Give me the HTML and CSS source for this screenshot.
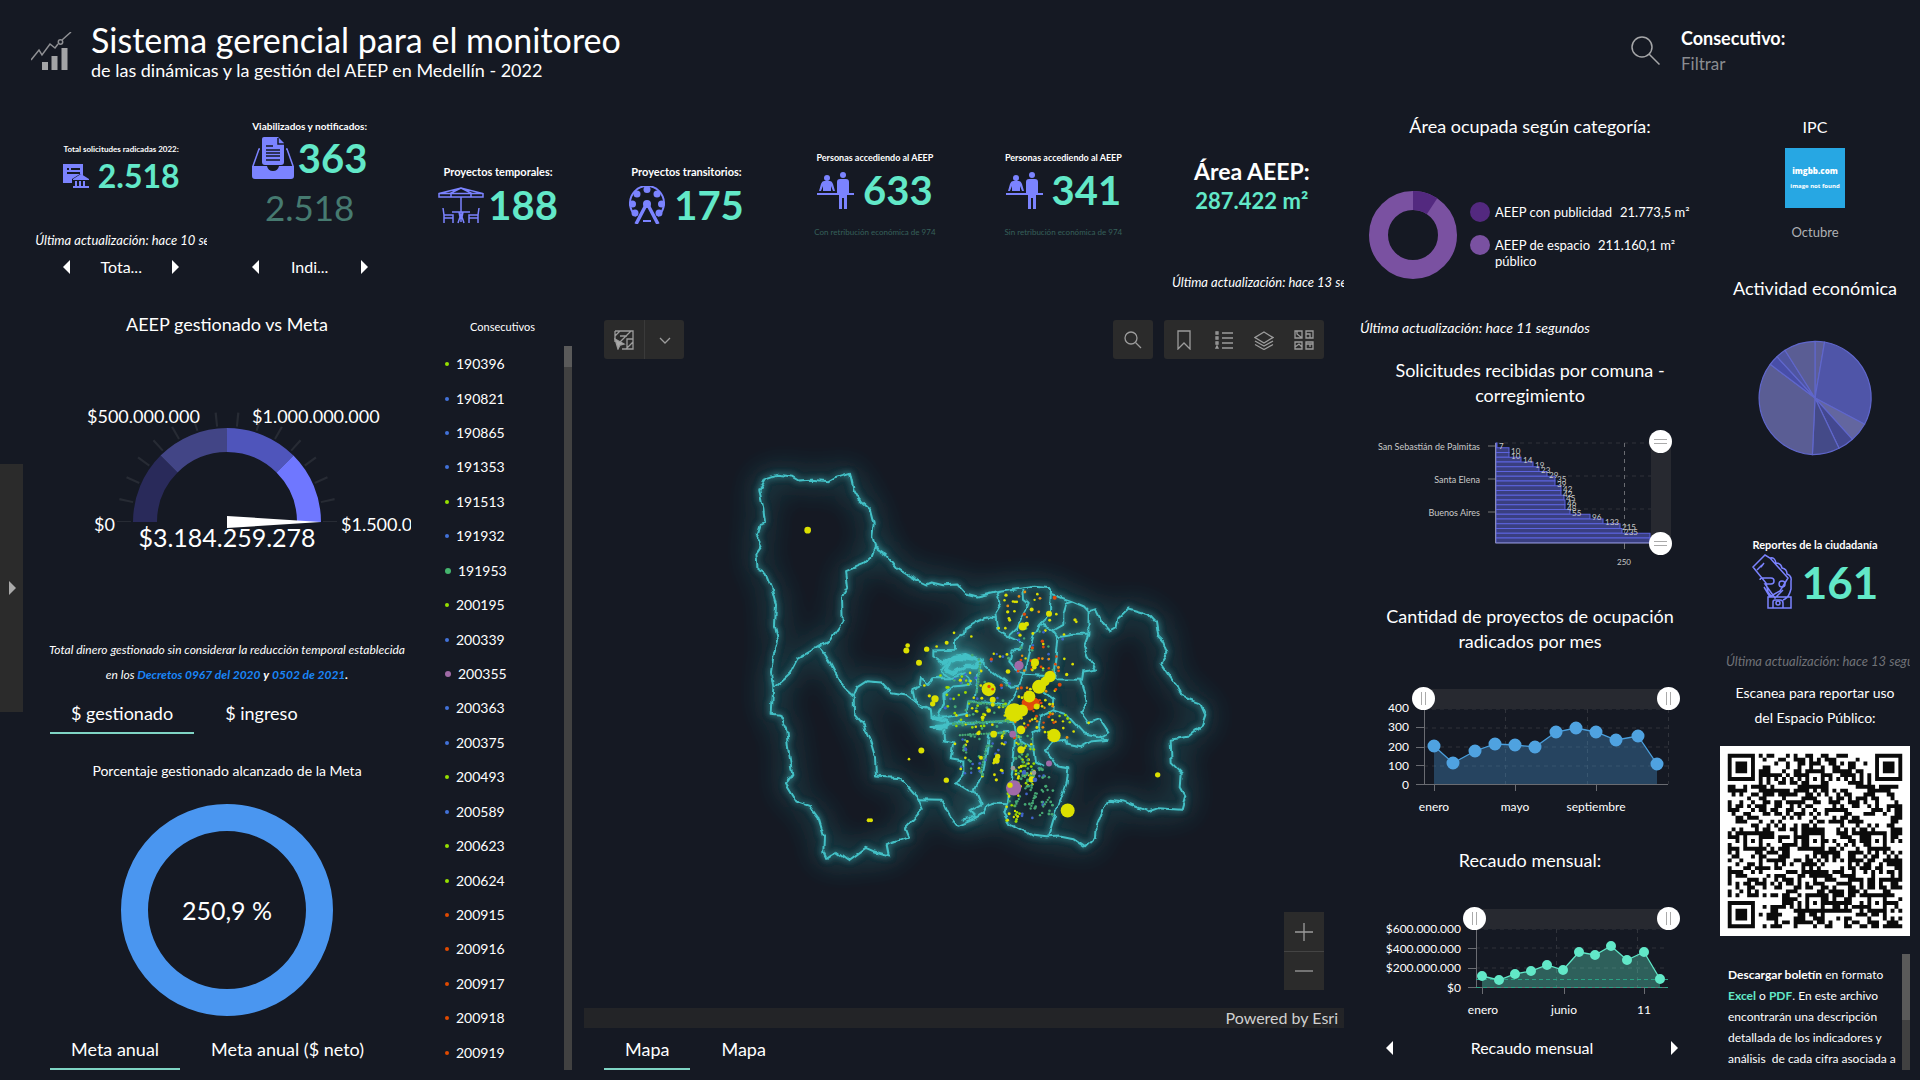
FILE: index.html
```html
<!DOCTYPE html>
<html lang="es">
<head>
<meta charset="utf-8">
<meta name="viewport" content="width=device-width, initial-scale=1">
<title>Sistema gerencial para el monitoreo</title>
<link rel="stylesheet" href="styles.css">
</head>
<body>
<svg class="defs" aria-hidden="true">
  <symbol id="people" viewBox="0 0 37 37">
    <circle cx="10" cy="6" r="3"/><circle cx="26" cy="3" r="3"/>
    <path d="M7 9h6q2 0 3 3l2 7h-2l-2-5v5H6v-5l-2 5H2l2-7q1-3 3-3zM20 10q0-3 3-3h6q3 0 3 3v11h-2v5h-8v-5h-2zM0 21h37v2H0zM22 24h3v13h-3zM27 24h3v13h-3z"/>
  </symbol>
  <symbol id="prev" viewBox="0 0 8 14"><path d="M7 0v14L0 7z"/></symbol>
  <symbol id="next" viewBox="0 0 8 14"><path d="M1 0v14l7-7z"/></symbol>
</svg>

<header class="top">
  <svg class="logo" viewBox="0 0 41 38" aria-hidden="true">
    <path d="M0 28l8-10 3 5 8-11 5 4 3-4M31 8l9-8" fill="none" stroke="#8f9094" stroke-width="1.5"/>
    <circle cx="29.500" cy="10" r="2.200" fill="none" stroke="#8f9094" stroke-width="1.500"/>
    <path d="M11 30h6v8h-6zM20.500 24h6v14h-6zM30.500 16h6v22h-6z" fill="#a3a4a6"/>
  </svg>
  <div class="heading">
    <h1>Sistema gerencial para el monitoreo</h1>
    <p>de las dinámicas y la gestión del AEEP en Medellín - 2022</p>
  </div>
  <div class="filter">
    <svg viewBox="0 0 29 29" aria-hidden="true"><circle cx="11" cy="11" r="10"/><path d="M18 18l10.500 10.500"/></svg>
    <div>
      <label for="consecutivo">Consecutivo:</label>
      <input id="consecutivo" type="text" placeholder="Filtrar">
    </div>
  </div>
</header>

<button class="drawer" aria-label="Abrir panel"><svg viewBox="0 0 8 14"><use href="#next"/></svg></button>

<main class="board">
  <div class="wide">
    <section class="kpis">
      <article class="kpi">
        <div class="body">
          <h2 class="t8">Total solicitudes radicadas 2022:</h2>
          <div class="figure">
            <svg class="i26" viewBox="0 0 26 24" aria-hidden="true"><path d="M0 0h20v12l-3-2-8 5v4H0z"/><path d="M4 4h2v2H4zM8 4h9v2H8zM4 8h13v2H4z" fill="#151923"/><path d="M10 15l8-5 8 5v1H10zM12 17h2v5h-2zM16 17h2v5h-2zM20 17h2v5h-2zM10 22h16v2H10z"/></svg>
            <strong class="n30">2.518</strong>
          </div>
        </div>
        <p class="update">Última actualización: hace 10 segundos</p>
        <nav class="pager"><button aria-label="Anterior"><svg><use href="#prev"/></svg></button><span>Tota...</span><button aria-label="Siguiente"><svg><use href="#next"/></svg></button></nav>
      </article>
      <article class="kpi">
        <div class="body">
          <h2 class="t10">Viabilizados y notificados:</h2>
          <div class="figure tight">
            <svg class="i42" viewBox="0 0 42 42" aria-hidden="true"><path d="M10 2q0-2 2-2h14l6 6v19q0 3-3 3H13q-3 0-3-3z"/><path d="M26 1v6h6M14 9h7M14 13h14M14 16h14M14 19h14M14 23h14" fill="none" stroke="#151923" stroke-width="1.500"/><path d="M8 12h-1L1 29v10M34 12h1l6 17v10" fill="none" stroke="#7b83ff" stroke-width="1.500"/><path d="M0 29h15q1 5 6 5t6-5h15v10q0 3-3 3H3q-3 0-3-3z"/></svg>
            <strong class="n40">363</strong>
          </div>
          <span class="second">2.518</span>
        </div>
        <nav class="pager"><button aria-label="Anterior"><svg><use href="#prev"/></svg></button><span>Indi...</span><button aria-label="Siguiente"><svg><use href="#next"/></svg></button></nav>
      </article>
      <article class="kpi plain">
        <div class="body">
          <h2 class="t11">Proyectos temporales:</h2>
          <div class="figure tight">
            <svg class="i46 line" viewBox="0 0 46 37" aria-hidden="true"><path d="M1 6.500L23 1l22 5.500V10H1zM23 1L13 6v4M23 1l10 5v4M1 6.500h44M23 10v25M14 25h18M5 21l1 7v8M6 28h9v8M6 31h9M41 21l-1 7v8M40 28h-9v8M40 31h-9M21 25l1 5-2 6M25 25l-1 5 2 6"/></svg>
            <strong class="n40">188</strong>
          </div>
        </div>
      </article>
      <article class="kpi plain">
        <div class="body">
          <h2 class="t11">Proyectos transitorios:</h2>
          <div class="figure">
            <svg class="i36" viewBox="0 0 36 38" aria-hidden="true"><path d="M7 30A17 17 0 1 1 29 30" fill="none" stroke="#7b83ff" stroke-width="2"/><g><circle cx="18" cy="3.500" r="3.500"/><circle cx="8" cy="8" r="3.500"/><circle cx="28" cy="8" r="3.500"/><circle cx="3.500" cy="18" r="3.500"/><circle cx="32.500" cy="18" r="3.500"/><circle cx="6" cy="27" r="3.500"/><circle cx="30" cy="27" r="3.500"/><circle cx="18" cy="18" r="4"/></g><path d="M17 19L7 38M19 19l10 19" stroke="#7b83ff" stroke-width="3.500"/><path d="M14 34h8v2h-8z"/></svg>
            <strong class="n40">175</strong>
          </div>
        </div>
      </article>
      <article class="kpi plain">
        <div class="body">
          <h2 class="t9">Personas accediendo al AEEP</h2>
          <div class="figure"><svg class="i37" aria-hidden="true"><use href="#people"/></svg><strong class="n40">633</strong></div>
          <p class="foot">Con retribución económica de 974</p>
        </div>
      </article>
      <article class="kpi plain">
        <div class="body">
          <h2 class="t9">Personas accediendo al AEEP</h2>
          <div class="figure"><svg class="i37" aria-hidden="true"><use href="#people"/></svg><strong class="n40">341</strong></div>
          <p class="foot">Sin retribución económica de 974</p>
        </div>
      </article>
      <article class="kpi">
        <div class="body">
          <h2 class="t22">Área AEEP:</h2>
          <strong class="n21">287.422 m²</strong>
        </div>
        <p class="update low">Última actualización: hace 13 segundos</p>
      </article>
    </section>

    <div class="lower">
      <div class="goals">
        <section class="goal">
          <h2 class="title">AEEP gestionado vs Meta</h2>
          <svg class="gauge" viewBox="43 400 368 160">
            <path class="ticks" pathLength="150" d="M124 522a103 103 0 0 1 206 0"/>
            <g fill="none" stroke-width="24">
              <path stroke="#292a5a" d="M145 522a82 82 0 0 1 24.020-57.980"/>
              <path stroke="#424586" d="M169.020 464.020A82 82 0 0 1 227 440"/>
              <path stroke="#4f55bb" d="M227 440a82 82 0 0 1 57.980 24.020"/>
              <path stroke="#6f77ff" d="M284.980 464.020A82 82 0 0 1 309 522"/>
            </g>
            <path d="M227 516l94 6-94 6z" fill="#fff"/>
            <text class="s18" x="94" y="531">$0</text>
            <text class="s18" x="87" y="423">$500.000.000</text>
            <text class="s18" x="252" y="423">$1.000.000.000</text>
            <text class="s18" x="341" y="531">$1.500.000.000</text>
            <text class="s25" x="227" y="547" text-anchor="middle">$3.184.259.278</text>
          </svg>
          <p class="note">Total dinero gestionado sin considerar la reducción temporal establecida<br>en los <a href="#d0967">Decretos 0967 del 2020</a> <b>y</b> <a href="#d0502">0502 de 2021</a><b>.</b></p>
          <div class="tabs"><button class="on">$ gestionado</button><button>$ ingreso</button></div>
        </section>
        <section class="goal ring">
          <h2 class="small-title">Porcentaje gestionado alcanzado de la Meta</h2>
          <svg viewBox="0 0 212 212"><circle cx="106" cy="106" r="92.500" fill="none" stroke="#4a96f0" stroke-width="27"/><text class="s25" x="106" y="116" text-anchor="middle">250,9 %</text></svg>
          <div class="tabs"><button class="on">Meta anual</button><button>Meta anual ($ neto)</button></div>
        </section>
      </div>

      <section class="consecutives">
        <h2>Consecutivos</h2>
        <div class="scroll-area">
          <ul>
            <li class="lime">190396</li><li class="blue">190821</li><li class="blue">190865</li><li class="blue">191353</li><li class="lime">191513</li><li class="blue">191932</li><li class="green">191953</li><li class="lime">200195</li><li class="blue">200339</li><li class="violet">200355</li><li class="blue">200363</li><li class="blue">200375</li><li class="lime">200493</li><li class="blue">200589</li><li class="lime">200623</li><li class="lime">200624</li><li class="red">200915</li><li class="red">200916</li><li class="red">200917</li><li class="red">200918</li><li class="red">200919</li>
          </ul>
          <div class="bar"><i></i></div>
        </div>
      </section>

      <section class="map-panel">
        <div class="map">
          <svg class="canvas" id="map" viewBox="-408 -412 2280 2109" role="img" aria-label="Mapa">
            <defs>
              <filter id="glow" x="-20%" y="-20%" width="140%" height="140%">
                <feTurbulence type="fractalNoise" baseFrequency="0.030" numOctaves="2" seed="4" result="n"/>
                <feDisplacementMap in="SourceGraphic" in2="n" scale="18" xChannelSelector="R" yChannelSelector="G" result="l"/>
                <feGaussianBlur in="l" stdDeviation="9" result="b1"/>
                <feGaussianBlur in="l" stdDeviation="45" result="b2"/>
                <feMerge><feMergeNode in="b2"/><feMergeNode in="b2"/><feMergeNode in="b1"/><feMergeNode in="l"/></feMerge>
              </filter>
            </defs>
            <g class="borders" filter="url(#glow)">
              <path d="M137 117L172 105 220 111 238 122 275 120 325 124 345 113 390 99 401 150 418 180 450 208 461 252 457 288 465 322 455 348 430 370 378 391 384 440 366 470 368 545 330 600 298 618"/>
              <path d="M137 117L118 152 130 205 135 250 116 256 107 285 125 322 109 345 113 390 140 405 154 440 168 495 165 560 174 600 160 650 153 700 160 740 155 822 180 825 198 865 205 930 217 1003 198 1030 232 1085 270 1098 294 1130 312 1190 310 1235 320 1257 350 1236 386 1262 437 1224 460 1234 506 1247 500 1216 566 1193 555 1165 608 1108 596 1078 540 1015 468 1010 465 950 450 900 427 850 402 820 401 768"/>
              <path d="M298 618L270 635 232 657 210 700 165 740M298 618L330 668 360 725 376 745 401 768 412 742 440 724 485 728 515 760 560 768 590 790 595 802 632 808"/>
              <path d="M465 322L500 345 535 388 570 410 620 434 635 428 670 436 712 434 735 460 772 470 830 457 880 450 940 441 993 445 993 462 1057 485 1092 500 1106 515 1127 508 1145 545 1172 575 1190 565 1195 535 1225 506 1290 525 1308 545 1315 590 1330 605 1342 640 1325 670 1345 700 1370 735 1385 770 1440 790 1456 825 1445 858 1405 890 1352 900 1355 970 1385 1000 1382 1045 1396 1070 1385 1110 1315 1105 1285 1115 1210 1085 1165 1080 1145 1120 1130 1160 1128 1190 1095 1222 1060 1198 1020 1190 980 1192 940 1188 895 1165 868 1150 850 1120 858 1090 825 1088 800 1096 790 1120 760 1138 712 1158 690 1130 668 1080 596 1078"/>
              <path d="M830 457L844 490 826 520 832 570 865 592 905 610 900 630 875 632 868 665 885 685 915 705M826 535L800 533 768 548 738 566 735 585 705 600 705 630 640 632 640 650 680 675 665 695 690 715"/>
              <path d="M910 450L912 480 926 492 918 515 900 545 890 570 868 592M993 450L990 510 975 540 960 555 940 590 925 640 915 700 895 740 865 790 860 825"/>
              <path d="M960 555L1000 572 1030 555 1030 525 1040 490 1057 485M1106 515L1105 585 1060 585 1015 592 1000 572M1105 585L1092 620 1105 655 1125 690 1090 695 1086 720 1010 718 1000 710 915 705M1015 592L1010 650 1003 712"/>
              <path stroke-width="11" d="M665 672L700 650 740 645 780 662 765 680 735 680 700 700 680 690 690 665 720 655 760 660"/>
              <path d="M780 662L810 690 840 715 870 738 895 735M780 662L772 720 765 770M690 715L735 700 752 715 750 735 700 740 670 765 672 790 655 830M640 715L675 712M690 715L640 715 625 735 603 708 600 735 580 745 590 790 632 808 635 835 680 832 740 822 745 785 800 785 860 795"/>
              <path stroke-width="9" d="M640 832L680 845 680 858 632 860 680 866"/>
              <path d="M680 852L780 848 880 843M670 870L672 905 700 910 692 955 730 962 730 1000 705 1030 745 1055 765 1056M880 843L885 890 882 950 872 1030 862 1090 850 1120M872 876L808 882 800 940 788 1000 765 1050 780 1085 785 1095 750 1115 765 1130 725 1140"/>
              <path d="M970 755L1003 780 1000 810 960 830 955 870 940 880 940 925 885 890M1000 812L1040 825 1090 880 1140 890 1165 875 1140 838 1105 850 1080 815 1100 785 1080 720M1165 900L1110 905 1080 922 1040 915 1035 900 1000 905 975 935 1015 980 1045 985 1040 1030 1015 1100 1000 1140 985 1190M940 925L945 965 975 980M1140 890L1165 900"/>
            </g>
          </svg>
          <div class="tools left">
            <button aria-label="Seleccionar"><svg viewBox="0 0 20 20"><path d="M1 1h18v18H8M1 12V1M1 6l5-5M6 12L17 1M12 19l7-7M13 19V9h6M6 6h7"/><path d="M1 9l9 5-4 1-2 4z" fill="#aaa"/></svg></button>
            <button aria-label="Más opciones"><svg viewBox="0 0 20 20"><path d="M5 8l5 5 5-5"/></svg></button>
          </div>
          <div class="tools right">
            <div class="set"><button aria-label="Buscar"><svg viewBox="0 0 20 20"><circle cx="8" cy="8" r="6"/><path d="M12.500 12.500L18 18"/></svg></button></div>
            <div class="set">
              <button aria-label="Marcadores"><svg viewBox="0 0 20 20"><path d="M4 1h12v18l-6-6-6 6z"/></svg></button>
              <button aria-label="Leyenda"><svg viewBox="0 0 20 20"><path d="M8 3h11M8 8h11M8 13h11M8 18h11M2 2h2v2H2zM2 7h2v2H2zM2 12h2v2H2zM2 18l1-2 1 2z"/></svg></button>
              <button aria-label="Capas"><svg viewBox="0 0 20 20"><path d="M10 2l9 5.500-9 5.500-9-5.500zM1 11l9 5 9-5M1 14.500l9 5 9-5"/></svg></button>
              <button aria-label="Mapas base"><svg viewBox="0 0 20 20"><path d="M1 1h7v7H1zM12 1h7v7h-7zM1 12h7v7H1zM12 12h7v7h-7zM3 1v3l5 4M12 4h4v4M1 17l4-3 3 3M12 14h7M16 14v3"/></svg></button>
            </div>
          </div>
          <div class="tools zoom">
            <button aria-label="Acercar"><svg viewBox="0 0 20 20"><path d="M10 1v18M1 10h18"/></svg></button>
            <button aria-label="Alejar"><svg viewBox="0 0 20 20"><path d="M1 10h18"/></svg></button>
          </div>
          <p class="credit">Powered by Esri</p>
        </div>
        <div class="tabs"><button class="on">Mapa</button><button>Mapa</button></div>
      </section>
    </div>
  </div>

  <div class="charts">
    <section class="card area">
      <h2 class="title">Área ocupada según categoría:</h2>
      <div class="split">
        <svg viewBox="0 0 88 88" aria-hidden="true"><g fill="none" stroke-width="19" transform="rotate(-90 44 44)"><circle cx="44" cy="44" r="34.500" stroke="#7a51a1"/><circle cx="44" cy="44" r="34.500" stroke="#53297f" pathLength="100" stroke-dasharray="9.300 90.700"/></g></svg>
        <ul class="legend">
          <li class="dark"><span>AEEP con publicidad</span><b>21.773,5 m²</b></li>
          <li><span>AEEP de espacio<br>público</span><b>211.160,1 m²</b></li>
        </ul>
      </div>
      <p class="update">Última actualización: hace 11 segundos</p>
    </section>

    <section class="card districts">
      <h2 class="title">Solicitudes recibidas por comuna -<br>corregimiento</h2>
      <div class="chart">
        <svg id="bars" viewBox="1348 410 368 165">
          <path class="grid" d="M1496 443h155M1496 476h155M1496 509h155"/>
          <path d="M1624.500 443v100" fill="none" stroke="#6a6c72" stroke-dasharray="4 4"/>
          <path d="M1488 446h8M1488 479h8M1488 512h8M1624.500 543v6" stroke="#777"/>
          <text class="s9" x="1480" y="450" text-anchor="end">San Sebastián de Palmitas</text>
          <text class="s9" x="1480" y="483" text-anchor="end">Santa Elena</text>
          <text class="s9" x="1480" y="516" text-anchor="end">Buenos Aires</text>
          <text class="s8" x="1624" y="565" text-anchor="middle">250</text>
        </svg>
        <div class="range upright"><input type="range" value="0" aria-label="Inicio"><input type="range" value="100" aria-label="Fin"></div>
      </div>
    </section>

    <section class="card monthly">
      <h2 class="title">Cantidad de proyectos de ocupación<br>radicados por mes</h2>
      <div class="chart">
        <svg viewBox="1348 655 368 165">
          <path class="grid" d="M1424 708h244M1424 727h244M1424 746h244M1424 765h244M1505.500 708v75M1587.500 708v75M1668.500 708v75"/>
          <path class="axis" d="M1424.500 700v83M1416 783.500h252M1416 726.500h8M1416 746.500h8M1416 764.500h8M1434.500 784v6M1515.500 784v6M1596.500 784v6"/>
          <path fill="#4a9fdd" fill-opacity=".33" d="M1434 783V745L1453 762 1475 750 1495 743 1515 744 1535 746 1556 731 1576 727 1596 731 1616 739 1638 735 1657 763V783z"/>
          <path class="run" stroke="#4a9fdd" d="M1434 745L1453 762 1475 750 1495 743 1515 744 1535 746 1556 731 1576 727 1596 731 1616 739 1638 735 1657 763"/>
          <path class="dots big" stroke="#4fa2e0" d="M1434 745h0M1453 762h0M1475 750h0M1495 743h0M1515 744h0M1535 746h0M1556 731h0M1576 727h0M1596 731h0M1616 739h0M1638 735h0M1657 763h0"/>
          <g class="s12" text-anchor="end"><text x="1409" y="711">400</text><text x="1409" y="730">300</text><text x="1409" y="750">200</text><text x="1409" y="769">100</text><text x="1409" y="788">0</text></g>
          <g class="s12" text-anchor="middle"><text x="1434" y="810">enero</text><text x="1515" y="810">mayo</text><text x="1596" y="810">septiembre</text></g>
        </svg>
        <div class="range full"><input type="range" value="0" aria-label="Inicio"><input type="range" value="100" aria-label="Fin"></div>
      </div>
    </section>

    <section class="card income">
      <h2 class="title">Recaudo mensual:</h2>
      <div class="chart">
        <svg viewBox="1348 874 368 150">
          <path class="grid" d="M1476 928h192M1476 947h192M1476 967h192M1556.500 928v58M1637.500 928v58"/>
          <path class="axis" d="M1476.500 928v58M1468 986.500h200M1468 947.500h8M1468 967.500h8M1482.500 987v6M1564.500 987v6M1644.500 987v6"/>
          <path fill="#5fe6c6" fill-opacity=".35" d="M1482 986V975L1499 979 1515 973 1531 970 1547 964 1563 969 1579 951 1595 954 1611 945 1627 959 1644 951 1660 978V986z"/>
          <path d="M1476 978.500h192M1476 986.500h192" fill="none" stroke="#2aa184" stroke-dasharray="4 3"/>
          <path class="run" stroke="#5fe6c6" d="M1482 975L1499 979 1515 973 1531 970 1547 964 1563 969 1579 951 1595 954 1611 945 1627 959 1644 951 1660 978"/>
          <path class="dots" stroke="#62e8c8" d="M1482 975h0M1499 979h0M1515 973h0M1531 970h0M1547 964h0M1563 969h0M1579 951h0M1595 954h0M1611 945h0M1627 959h0M1644 951h0M1660 978h0"/>
          <g class="s12" text-anchor="end"><text x="1461" y="932">$600.000.000</text><text x="1461" y="952">$400.000.000</text><text x="1461" y="971">$200.000.000</text><text x="1461" y="991">$0</text></g>
          <g class="s12" text-anchor="middle"><text x="1483" y="1013">enero</text><text x="1564" y="1013">junio</text><text x="1644" y="1013">11</text></g>
        </svg>
        <div class="range short"><input type="range" value="0" aria-label="Inicio"><input type="range" value="100" aria-label="Fin"></div>
      </div>
      <nav class="pager spread"><button aria-label="Anterior"><svg><use href="#prev"/></svg></button><span>Recaudo mensual</span><button aria-label="Siguiente"><svg><use href="#next"/></svg></button></nav>
    </section>
  </div>

  <aside class="side">
    <section class="ipc">
      <h2 class="t16">IPC</h2>
      <div class="missing"><b>imgbb.com</b><span>image not found</span></div>
      <p>Octubre</p>
    </section>
    <section class="activity">
      <h2 class="title">Actividad económica</h2>
      <svg viewBox="-58 -58 116 116" role="img" aria-label="Actividad económica">
        <g stroke="#6067cc" stroke-width="1.200" stroke-linejoin="round">
          <path fill="#5c5e96" d="M0 0V-56.700A56.700 56.700 0 0 1 9.600-56z"/>
          <path fill="#4f55a8" d="M0 0L9.600-56A56.700 56.700 0 0 1 49.600 26.300z"/>
          <path fill="#63669f" d="M0 0L49.600 26.300A56.700 56.700 0 0 1 37.400 41.300z"/>
          <path fill="#434890" d="M0 0L37.400 41.300A56.700 56.700 0 0 1 24 50.300z"/>
          <path fill="#444a88" d="M0 0L24 50.300A56.700 56.700 0 0 1-2.600 56.600z"/>
          <path fill="#5a5d94" d="M0 0L-2.600 56.600A56.700 56.700 0 0 1-44.800-33.700z"/>
          <path fill="#484ea8" d="M0 0L-44.800-33.700A56.700 56.700 0 0 1-38-41.300z"/>
          <path fill="#4f55a0" d="M0 0L-38-41.300A56.700 56.700 0 0 1-30-47.700z"/>
          <path fill="#5a5d94" d="M0 0L-30-47.700A56.700 56.700 0 0 1 0-56.700z"/>
        </g>
      </svg>
    </section>
    <section class="reports">
      <h2 class="t11">Reportes de la ciudadanía</h2>
      <div class="figure">
        <svg class="line phone" viewBox="0 0 42 55" aria-hidden="true"><path d="M1 13L13 1l5 3 18 20-8 13-9 5-3-4-2-9zM5 16l5-5M9 13l3-4M18 4q5-1 6 5 5 0 6 5 5 1 5 6 5 2 4 7v8q-2 8-6 10l-2 1M8 26q0-2 3-2h8q3 0 3 3t-3 3h-6l10 14 8-8M12 33l6 10M16 43h23v11H16zM21 54v-6q0-2 2-2h5q3 0 3 3v5"/><circle cx="30" cy="30" r="3"/><circle cx="26" cy="49" r="2"/></svg>
        <strong class="n44">161</strong>
      </div>
      <p class="update dim">Última actualización: hace 13 segundos</p>
    </section>
    <section class="scan">
      <p>Escanea para reportar uso<br>del Espacio Público:</p>
      <svg id="qr" viewBox="-2 -2 49 49" role="img" aria-label="Código QR"><path fill="#fff" d="M-2-2h49v49h-49z"/></svg>
    </section>
    <section class="bulletin">
      <p><b>Descargar boletín</b> en formato <a href="#excel">Excel</a> o <a href="#pdf">PDF</a>. En este archivo encontrarán una descripción detallada de los indicadores y análisis&nbsp; de cada cifra asociada a</p>
      <div class="bar"><i></i></div>
    </section>
  </aside>
</main>
<script src="script.js"></script>
</body>
</html>
```
FILE: styles.css
```css
* { box-sizing: border-box; }
body {
  margin: 0;
  min-height: 100vh;
  display: flex;
  flex-direction: column;
  background: #151923;
  color: #fff;
  font-family: Lato, "Open Sans", sans-serif;
  font-size: 13px;
}
h1, h2, p, ul { margin: 0; padding: 0; font-weight: 400; }
ul { list-style: none; }
button {
  border: 0;
  padding: 0;
  background: none;
  color: inherit;
  font: inherit;
}
a { text-decoration: none; }
.defs { position: absolute; width: 0; height: 0; }

/* header */
.top {
  height: 100px;
  padding: 20px 118px 0 31px;
  display: flex;
  align-items: flex-start;
  gap: 19px;
}
.logo { width: 41px; height: 38px; margin-top: 12px; }
.heading { flex: 1; }
.heading h1 { font-size: 34px; line-height: 40px; }
.heading p { font-size: 18px; line-height: 20px; }
.filter { display: flex; gap: 21px; align-items: flex-start; }
.filter svg {
  width: 29px;
  height: 29px;
  margin-top: 16px;
  fill: none;
  stroke: #a5a6a8;
  stroke-width: 1.5;
}
.filter div { display: flex; flex-direction: column; width: 121px; padding-top: 5px; }
.filter label { font-size: 18px; line-height: 26px; font-weight: 700; }
.filter input {
  border: 0;
  padding: 0;
  width: 100%;
  background: none;
  color: #fff;
  font: 17px/26px Lato, sans-serif;
}
.filter input::placeholder { color: #8a8c90; }

.drawer {
  position: absolute;
  left: 0;
  top: 43%;
  width: 23px;
  height: 248px;
  background: #2b2b2b;
}
.drawer svg, .pager svg { width: 8px; height: 14px; fill: #fff; display: block; }
.drawer svg { margin: 0 auto; fill: #aaa; }

/* columns */
.board {
  flex: 1;
  display: grid;
  grid-template-columns: 1319fr 368fr 190fr;
  gap: 4px;
  padding: 0 10px 10px 25px;
}
.wide, .charts, .side { display: flex; flex-direction: column; min-width: 0; }

/* indicators */
.kpis { display: grid; grid-template-columns: repeat(7, minmax(0, 1fr)); height: 200px; }
.kpi { display: flex; flex-direction: column; align-items: center; padding: 0 0 18px 4px; }
.kpi.plain { padding-bottom: 6px; }
.kpi .body {
  flex: 1;
  display: flex;
  flex-direction: column;
  align-items: center;
  justify-content: center;
}
.kpi h2, .reports h2 { font-weight: 700; white-space: nowrap; }
.t8 { font-size: 8px; line-height: 20px; }
.t9 { font-size: 9px; line-height: 14px; }
.t10 { font-size: 10px; line-height: 14px; }
.t11 { font-size: 11px; line-height: 16px; }
.t16 { font-size: 16px; line-height: 25px; }
.t22 { font-size: 23px; line-height: 28px; }
.figure { display: flex; align-items: center; gap: 9px; color: #62e8c8; }
.figure.tight { gap: 4px; }
.figure svg { fill: #7b83ff; flex: none; }
.figure svg.line { fill: none; stroke: #7b83ff; stroke-width: 1.5; }
.figure strong, .n21 { line-height: 50px; font-weight: 700; }
.i26 { width: 26px; height: 24px; }
.i42 { width: 42px; height: 42px; }
.i46 { width: 46px; height: 37px; }
.i36 { width: 36px; height: 38px; }
.i37 { width: 37px; height: 37px; }
.figure .n30 { font-size: 32px; line-height: 34px; }
.n40 { font-size: 40px; }
.n44 { font-size: 44px; }
.kpi .n21 { font-size: 22px; line-height: 32px; color: #62e8c8; }
.second { font-size: 35px; line-height: 48px; color: #467a70; }
.foot { padding-top: 6px; font-size: 8px; line-height: 22px; color: #35605a; white-space: nowrap; }
.update {
  width: 100%;
  font-size: 14px;
  line-height: 18px;
  font-style: italic;
  white-space: nowrap;
  overflow: hidden;
}
.kpi .update { width: 172px; font-size: 13px; }
.pager {
  width: 116px;
  display: flex;
  align-items: center;
  justify-content: space-between;
  font-size: 16px;
  line-height: 36px;
}
.kpi .pager { margin-bottom: -3px; }
.kpi .low { margin: 0 0 -9px auto; }

/* lower area */
.lower {
  flex: 1;
  display: grid;
  grid-template-columns: 386fr 165fr 760fr;
  gap: 4px;
}
.goals { display: flex; flex-direction: column; }
.goal { display: flex; flex-direction: column; flex: 1; padding: 0 0 0 18px; }
.title { font-size: 18px; line-height: 25px; text-align: center; }
.goal .title { padding-top: 12px; }
.gauge { display: block; width: 100%; margin: 63px 0 auto; }
.note { font-size: 12px; line-height: 25px; font-style: italic; text-align: center; white-space: nowrap; }
.note a { color: #1a86f8; font-weight: 700; }
.tabs { display: flex; gap: 10px; padding-left: 7px; }
.tabs button {
  padding: 0 21px;
  font-size: 18px;
  line-height: 38px;
  border-bottom: 2px solid transparent;
}
.tabs .on { border-color: #7fd4c4; }
.goal .note + .tabs { margin-top: 7px; }
.ring { flex: none; }
.small-title { font-size: 14px; line-height: 20px; text-align: center; padding-top: 27px; }
.ring svg { width: 212px; height: 212px; margin: 23px auto 14px; }

.consecutives h2 { font-size: 11px; line-height: 16px; padding: 19px 0 11px 10px; text-align: center; }
.consecutives { display: flex; flex-direction: column; }
.scroll-area { flex: 1; display: flex; justify-content: space-between; padding-right: 8px; }
.consecutives ul { display: flex; flex-direction: column; flex: 1; padding: 1px 0 0 30px; }
.consecutives li {
  flex: 1;
  display: flex;
  align-items: center;
  gap: 7px;
  font-size: 14px;
  line-height: 16px;
}
.consecutives li::before { content: ""; width: 4px; height: 4px; border-radius: 50%; background: #4272d8; }
.consecutives .lime::before { background: #95e000; }
.consecutives .red::before { background: #e04a00; }
.consecutives .green::before { width: 6px; height: 6px; background: #45b56e; }
.consecutives .violet::before { width: 6px; height: 6px; background: #9f6aa5; }
.bar { width: 8px; background: #414141; }
.bar i { display: block; height: 21px; background: #5a5a5a; }

.map-panel { display: flex; flex-direction: column; }
.map { position: relative; flex: 1; display: flex; flex-direction: column; }
.canvas { display: block; width: 100%; flex: 1; min-height: 0; height: 703px; }
.borders { fill: none; stroke: #49d3d8; stroke-width: 6; stroke-linejoin: round; opacity: .9; }
.credit {
  background: #232427;
  font-size: 16px;
  line-height: 20px;
  text-align: right;
  padding-right: 6px;
  color: #d0d0d0;
}
.tools { position: absolute; display: flex; }
.tools svg { width: 20px; height: 20px; display: block; margin: auto; fill: none; stroke: #9c9c9c; stroke-width: 1.3; }
.tools button { width: 40px; height: 39px; background: #2b2b2b; }
.tools.left { left: 20px; top: 20px; border-radius: 3px; overflow: hidden; }
.tools.left button + button { border-left: 1px solid #3a3a3a; }
.tools.right { right: 20px; top: 20px; gap: 11px; }
.set { display: flex; border-radius: 3px; overflow: hidden; }
.tools.zoom { right: 20px; bottom: 38px; flex-direction: column; }
.tools.zoom button + button { border-top: 1px solid #444; }
.map-panel .tabs { padding: 2px 0 0 20px; }

/* charts column */
.card { flex: 244 1 0; padding-top: 14px; display: flex; flex-direction: column; }
.districts { flex-grow: 246; }
.income { flex-grow: 236; }
.card .title { padding-right: 4px; }
.split { flex: 1; display: flex; align-items: center; gap: 13px; padding: 12px 0 0 21px; }
.split svg { width: 88px; height: 88px; flex: none; }
.legend {
  display: flex;
  flex-direction: column;
  gap: 12px;
  font-size: 13px;
  line-height: 16px;
  white-space: nowrap;
}
.legend li { display: flex; gap: 8px; align-items: flex-start; padding-top: 3px; }
.legend b { font-weight: 400; }
.legend li::before { content: ""; width: 20px; height: 20px; margin: -2px -3px 0 0; border-radius: 50%; background: #7a51a1; }
.legend .dark::before { background: #53297f; }
.area .update { padding: 0 0 7px 12px; line-height: 18px; }
.chart { position: relative; margin-top: 2px; }
.chart svg { display: block; width: 100%; }
.pager.spread { width: 292px; margin: auto auto 4px; }
svg text { fill: #fff; }
svg .s8, svg .s9 { fill: #c9c9c9; }
.s8 { font-size: 8px; }
.s9 { font-size: 9px; }
.s12 { font-size: 12px; }
.s18 { font-size: 18px; }
.s25 { font-size: 25px; }
.ticks { fill: none; stroke: #272b34; stroke-width: 14; stroke-dasharray: 1 9; stroke-dashoffset: .5; }
.grid { fill: none; stroke: #30333b; stroke-dasharray: 4 4; }
.axis { fill: none; stroke: #6a6c72; }
.run { fill: none; stroke-width: 1.3; }
.dots { fill: none; stroke-width: 10; stroke-linecap: round; }
.dots.big { stroke-width: 13; }
.bars rect { fill: #3a3f80; stroke: #5d64e0; }

.range { position: absolute; height: 20px; background: #272930; }
.range.full { left: 20.7%; width: 66.3%; top: 20%; }
.range.short { left: 34.5%; width: 52.5%; top: 23%; }
.range.upright { left: 82.3%; width: 20px; top: 19.5%; height: 61%; }
.range input {
  appearance: none;
  position: absolute;
  left: -12px;
  top: -2px;
  width: calc(100% + 24px);
  height: 23px;
  margin: 0;
  background: none;
  pointer-events: none;
}
.range input::-webkit-slider-thumb {
  appearance: none;
  pointer-events: auto;
  width: 23px;
  height: 23px;
  border-radius: 50%;
  background: linear-gradient(90deg, #aaa 1px, transparent 1px 4px, #aaa 4px) center / 5px 13px no-repeat #fff;
}
.range.upright input {
  writing-mode: vertical-lr;
  left: -2px;
  top: -12px;
  width: 23px;
  height: calc(100% + 24px);
}
.range.upright input::-webkit-slider-thumb {
  background: linear-gradient(#aaa 1px, transparent 1px 4px, #aaa 4px) center / 13px 5px no-repeat #fff;
}

/* right column */
.side section { text-align: center; }
.ipc { flex: 157 1 0; padding-top: 14px; }
.missing {
  width: 60px;
  height: 60px;
  margin: 9px auto 15px;
  background: #27a7e3;
  display: flex;
  flex-direction: column;
  justify-content: center;
  gap: 5px;
  font: 700 9px/11px "Open Sans", sans-serif;
}
.missing b { font-size: 8px; }
.missing span { font-size: 6px; white-space: nowrap; }
.ipc p { color: #b0b1b4; font-size: 13px; line-height: 18px; }
.activity { flex: 275 1 0; padding-top: 14px; }
.activity svg { width: 116px; height: 116px; margin-top: 39px; }
.reports { flex: 142 1 0; padding-top: 3px; }
.reports .figure { justify-content: center; gap: 8px; margin-top: 1px; }
.reports .phone { width: 42px; height: 55px; }
.reports .update { margin-top: 43px; padding-left: 6px; text-align: left; font-size: 13px; }
.dim { color: #707277; }
.scan { padding-top: 9px; }
.scan p { font-size: 14px; line-height: 25px; padding-bottom: 16px; }
#qr { display: block; width: 100%; }
.side .bulletin { display: flex; margin-top: 18px; height: 116px; overflow: hidden; text-align: left; }
.bulletin p { flex: 1; padding: 10px 0 0 8px; font-size: 12px; line-height: 21px; }
.bulletin a { color: #62e8c8; font-weight: 700; }
.bulletin .bar i { height: 66px; }
```
FILE: script.js
```js
const NS = "http://www.w3.org/2000/svg";
const add = (parent, tag, attrs, text) => {
  const el = document.createElementNS(NS, tag);
  for (const k in attrs) el.setAttribute(k, attrs[k]);
  if (text) el.textContent = text;
  parent.appendChild(el);
  return el;
};
let seed = 7;
const rnd = () => (seed = (seed * 16807) % 2147483647) / 2147483647;

// requests per district: bar length and label
const rows = [[1, 7], [13, 10], [13, 10], [25, 14], [37, 19], [43, 23], [51, 29], [59, 35], [59, 39], [65, 42], [65, 42], [68, 45], [69, 46], [69, 48], [74, 55], [94, 96], [107, 133], [124, 215], [126, 235], [154, ""], [154, ""]];
const bars = document.getElementById("bars");
const g = add(bars, "g", { class: "bars" });
rows.forEach(([w], i) => add(g, "rect", { x: 1496, y: 443 + i * 4.75, width: w, height: 4.75 }));
rows.forEach(([w, v], i) => v && add(bars, "text", { class: "s8", x: 1498 + w, y: 449 + i * 4.75 }, String(v)));
add(bars, "path", { d: "M1495.5 443v100h156", fill: "none", stroke: "#8a8cb0" });

// project locations
const map = document.getElementById("map");
const dot = (c, x, y, r) => add(map, "circle", { cx: x, cy: y, r, fill: c });
const scatter = (n, x, y, w, h, colors) => {
  for (let i = 0; i < n; i++) dot(colors[Math.floor(rnd() * colors.length)], x + rnd() * w, y + rnd() * h, 3.5 + rnd());
};
const green = "#45a874", lime = "#9bd800", yellow = "#dbe000", blue = "#4064c8", red = "#e04a0c", orange = "#e89010", violet = "#a06aa8";
scatter(50, 700, 790, 170, 100, [green, green, green, lime, yellow]);
scatter(45, 720, 890, 140, 120, [green, green, yellow, blue]);
scatter(70, 885, 880, 60, 160, [green, green, lime, yellow]);
scatter(50, 905, 985, 95, 150, [green, green, green, green, blue]);
scatter(40, 890, 560, 130, 150, [green, yellow, orange, red, blue]);
scatter(45, 880, 740, 130, 130, [yellow, orange, red, yellow]);
scatter(25, 750, 640, 120, 150, [green, green, yellow, blue]);
scatter(25, 855, 1030, 45, 115, [lime, green, yellow]);
scatter(18, 660, 700, 100, 110, [lime, green, blue]);
scatter(14, 840, 455, 170, 90, [yellow, orange]);
scatter(12, 950, 820, 110, 90, [yellow, orange, lime]);
for (const [x1, y1, x2, y2] of [[700, 852, 880, 842], [745, 785, 870, 800], [780, 670, 770, 760], [800, 920, 782, 1000], [720, 886, 860, 878], [900, 1070, 885, 1100], [946, 1060, 930, 1112], [970, 1100, 990, 1070]]) {
  const n = Math.hypot(x2 - x1, y2 - y1) / 8;
  for (let i = 0; i < n; i++) dot(green, x1 + (x2 - x1) * i / n, y1 + (y2 - y1) * i / n, 3.5);
}
[[918, 788, 13], [942, 790, 17], [930, 800, 12]].forEach(d => dot(red, ...d));
[[263, 271, 10], [563, 617, 7], [559, 632, 9], [620, 628, 8], [597, 669, 9], [650, 620, 4], [680, 609, 6], [702, 579, 4], [754, 590, 4], [604, 932, 9], [567, 958, 4], [679, 1021, 8], [446, 1141, 6], [453, 1141, 6], [1043, 1112, 21], [1313, 1005, 8], [1002, 887, 20], [990, 710, 17], [975, 725, 14], [957, 741, 21], [928, 770, 18], [882, 818, 28], [906, 812, 18], [950, 800, 9], [806, 748, 21], [945, 668, 12], [943, 682, 7], [908, 560, 12], [920, 553, 7], [987, 522, 9], [864, 695, 7], [863, 516, 5], [879, 485, 4], [858, 466, 5], [935, 509, 6], [952, 463, 4], [1009, 523, 4], [1065, 540, 5], [1069, 546, 4], [1032, 584, 4], [821, 883, 10], [903, 870, 13], [903, 930, 11], [829, 962, 10], [833, 950, 8], [935, 1018, 9], [645, 777, 11], [638, 792, 8], [628, 768, 5], [613, 737, 4], [788, 833, 6], [775, 880, 6], [783, 954, 6], [806, 812, 7], [818, 780, 9], [818, 795, 6], [840, 650, 4], [836, 565, 4], [856, 565, 4], [1106, 849, 4], [1061, 875, 4], [721, 721, 5], [705, 912, 4], [736, 954, 4], [1040, 704, 5], [1058, 673, 4], [1033, 657, 4], [900, 586, 5], [829, 1020, 5]].forEach(d => dot(yellow, ...d));
[[1004, 474, 6], [913, 523, 5], [967, 604, 5], [937, 624, 5], [1009, 650, 4], [1006, 673, 4], [814, 658, 5], [807, 740, 5], [818, 748, 4], [844, 736, 5], [904, 744, 5], [1019, 735, 6], [991, 824, 4], [883, 893, 5]].forEach(d => dot(red, ...d));
[[897, 677, 14], [878, 883, 10], [987, 971, 9], [881, 1044, 23]].forEach(d => dot(violet, ...d));
[[879, 985, 7], [942, 999, 7]].forEach(d => dot("#9c9c9c", ...d));
[[945, 1020, 7], [912, 998, 7], [676, 804, 5], [1028, 598, 4]].forEach(d => dot(blue, ...d));
dot(yellow, 870, 1036, 8);

// 45 x 45 code with finder, timing and alignment patterns
const N = 45;
const ring = (x, y, cx, cy, solid) => {
  const d = Math.max(Math.abs(x - cx), Math.abs(y - cy));
  return solid ? d !== 2 && d < 4 : d !== 1;
};
let path = "";
for (let y = 0; y < N; y++) for (let x = 0; x < N; x++) {
  let on = rnd() < 0.5;
  if (x === 6 || y === 6) on = (x + y) % 2 === 0;
  for (const [cx, cy] of [[22, 6], [6, 22], [22, 22], [38, 22], [22, 38], [38, 38]])
    if (Math.max(Math.abs(x - cx), Math.abs(y - cy)) < 3) on = ring(x, y, cx, cy, false);
  for (const [cx, cy] of [[3, 3], [41, 3], [3, 41]])
    if (Math.max(Math.abs(x - cx), Math.abs(y - cy)) < 5) on = ring(x, y, cx, cy, true);
  if (on) path += `M${x} ${y}h1v1h-1z`;
}
add(document.getElementById("qr"), "path", { d: path, fill: "#0b0b0b" });
```
